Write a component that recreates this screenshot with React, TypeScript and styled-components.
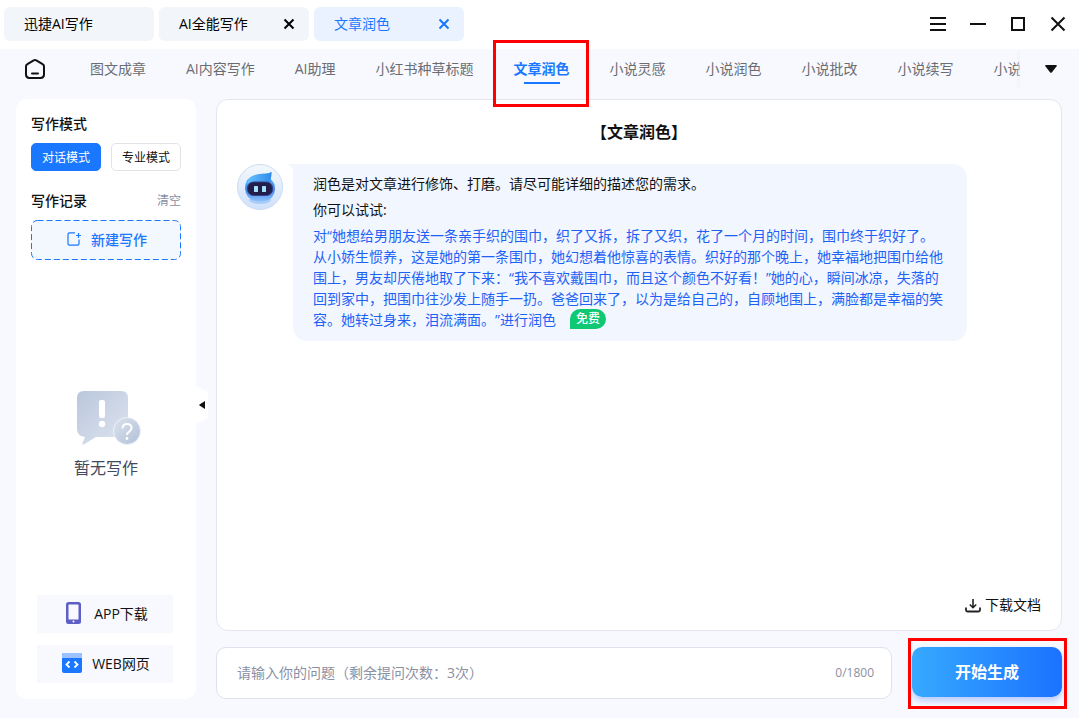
import React from "react";
import styled, { createGlobalStyle } from "styled-components";

const GlobalStyle = createGlobalStyle`
  *, *::before, *::after { box-sizing: border-box; }
  body {
    margin: 0;
    background: #f7f9fe;
    color: #111;
    font-family: "Open Sans", "Noto Sans CJK SC", sans-serif;
    font-size: 14px;
    line-height: 21px;
    text-spacing-trim: space-all;
  }
  button, input {
    font: inherit;
    color: inherit;
    border: 0;
    padding: 0;
    background: none;
  }
  button { cursor: pointer; }
  h1, h2, p { margin: 0; }
  svg { display: block; flex: none; }
`;

const Shell = styled.div`
  display: flex;
  flex-direction: column;
  min-height: 100vh;
`;

const TitleBar = styled.header`
  display: flex;
  align-items: center;
  justify-content: space-between;
  height: 49px;
  padding: 0 1px 1px 4px;
  background: #fff;
`;

const DocTabs = styled.div`
  display: flex;
  gap: 5px;
`;

const DocTab = styled.div<{ $active?: boolean }>`
  display: flex;
  align-items: center;
  justify-content: space-between;
  width: 150px;
  height: 34px;
  padding: 0 14px 0 20px;
  border-radius: 6px;
  background: ${(p) => (p.$active ? "#eaf2ff" : "#f2f6fb")};
  color: ${(p) => (p.$active ? "#1a77ff" : "#000")};
`;

const DocTabLabel = styled.button`
  padding-bottom: 2px;
`;

const WindowControls = styled.div`
  display: flex;
`;

const ControlButton = styled.button`
  display: grid;
  place-items: center;
  width: 40px;
  height: 40px;
`;

const Nav = styled.nav`
  display: flex;
  align-items: center;
  height: 40px;
  padding-left: 24px;
`;

const HomeButton = styled.button`
  margin-right: 44px;
`;

const NavStrip = styled.div`
  position: relative;
  z-index: 1;
  display: flex;
  flex: 1;
  align-items: center;
  gap: 40px;
  height: 40px;
  min-width: 0;
  overflow-x: clip;
  overflow-y: visible;

  &::after {
    content: "";
    position: absolute;
    top: 2px;
    right: 0;
    width: 5px;
    height: 38px;
    background: linear-gradient(90deg, rgba(240, 241, 245, 0), #eff0f4);
    opacity: 0.6;
  }
`;

const NavItem = styled.button<{ $active?: boolean }>`
  position: relative;
  flex: none;
  height: 40px;
  padding-bottom: 2px;
  white-space: nowrap;
  color: ${(p) => (p.$active ? "#1a77ff" : "#6b6d73")};
  font-weight: ${(p) => (p.$active ? 700 : 400)};
`;

const ActiveLine = styled.span`
  position: absolute;
  left: 10px;
  right: 10px;
  bottom: 5px;
  height: 2px;
  background: #1a77ff;
`;

const NavHighlight = styled.span`
  position: absolute;
  inset: -9px -19px -18px -21px;
  border: 3px solid #f00;
  pointer-events: none;
`;

const MoreButton = styled.button`
  display: grid;
  place-items: center;
  width: 59px;
  height: 40px;
  padding-left: 2px;
`;

const Body = styled.div`
  display: flex;
  flex: 1;
  gap: 20px;
  padding: 10px 17px 19px 16px;
`;

const Sidebar = styled.aside`
  position: relative;
  display: flex;
  flex: none;
  flex-direction: column;
  width: 180px;
  padding: 14px 15px 16px;
  border-radius: 10px;
  background: #fff;
`;

const SectionHead = styled.div`
  display: flex;
  align-items: center;
  justify-content: space-between;
`;

const SectionTitle = styled.h2`
  font-size: 14px;
  line-height: 21px;
  font-weight: 500;
`;

const ClearButton = styled.button`
  font-size: 12px;
  color: #8b8ea3;
`;

const ModeRow = styled.div`
  display: flex;
  gap: 10px;
  margin: 9px 0 19px;
`;

const ModeButton = styled.button<{ $active?: boolean }>`
  flex: 1;
  height: 28px;
  border: 1px solid ${(p) => (p.$active ? "#1a77ff" : "#e2e3e8")};
  border-radius: 5px;
  background: ${(p) => (p.$active ? "#1a77ff" : "#fff")};
  color: ${(p) => (p.$active ? "#fff" : "#111")};
  font-size: 12px;
`;

const NewButton = styled.button`
  position: relative;
  display: flex;
  align-items: center;
  justify-content: center;
  gap: 10px;
  height: 40px;
  margin-top: 9px;
  padding: 0 0 2px 2px;
  border-radius: 6px;
  background: #f3f7fe;
  color: #1a77ff;
  font-weight: 500;
`;

const DashedOutline = styled.svg`
  position: absolute;
  inset: 0;
  width: 100%;
  height: 100%;
`;

const EmptyState = styled.div`
  display: flex;
  flex: 1;
  flex-direction: column;
  align-items: center;
  justify-content: center;
  gap: 10px;
  padding-top: 15px;
  color: #43495c;
  font-size: 16px;
  line-height: 24px;

  svg { margin-left: 6px; }
`;

const AppLinks = styled.div`
  display: flex;
  flex-direction: column;
  gap: 12px;
  padding: 0 8px 0 6px;
`;

const AppLink = styled.button`
  display: flex;
  align-items: center;
  justify-content: center;
  gap: 10px;
  height: 38px;
  padding: 0 0 2px 2px;
  background: #f7f9fe;
`;

const CollapseHandle = styled.button`
  position: absolute;
  top: 50%;
  left: 180px;
  margin-top: -13px;
`;

const Main = styled.main`
  display: flex;
  flex: 1;
  flex-direction: column;
  gap: 16px;
  min-width: 0;
`;

const ChatPanel = styled.section`
  display: flex;
  flex: 1;
  flex-direction: column;
  padding: 20px 20px 15px;
  border: 1px solid #e4e6ef;
  border-radius: 12px;
  background: #fff;
`;

const PanelTitle = styled.h1`
  font-size: 16px;
  line-height: 24px;
  font-weight: 700;
  text-align: center;
`;

const Message = styled.div`
  display: flex;
  align-items: flex-start;
  gap: 10px;
  margin: 20px 74px 0 0;
`;

const Bubble = styled.div`
  position: relative;
  flex: 1;
  display: flex;
  flex-direction: column;
  gap: 5px;
  padding: 9px 20px 11px;
  border-radius: 0 14px 14px 14px;
  background: #f2f6fe;

  &::before {
    content: "";
    position: absolute;
    top: 0;
    left: -8px;
    width: 8px;
    height: 8px;
    background: radial-gradient(circle at 0 100%, transparent 8px, #f2f6fe 8px);
  }
`;

const Sample = styled.p`
  color: #1e62f5;
`;

const FreeBadge = styled.span`
  display: inline-block;
  height: 20px;
  margin-left: 14px;
  padding: 0 6px;
  border-radius: 10px 10px 10px 0;
  background: #0fc873;
  color: #fff;
  font-size: 12px;
  line-height: 20px;
  font-weight: 500;
  vertical-align: top;
`;

const DownloadButton = styled.button`
  display: flex;
  align-items: center;
  gap: 4px;
  margin: auto 0 0 auto;
`;

const Composer = styled.form`
  display: flex;
  align-items: flex-start;
  gap: 20px;
`;

const PromptBox = styled.div`
  display: flex;
  flex: 1;
  align-items: center;
  height: 52px;
  padding: 0 17px 2px 20px;
  border: 1px solid #dfe2ec;
  border-radius: 10px;
  background: #fff;
  color: #8b90a3;
`;

const PromptInput = styled.input`
  flex: 1;
  min-width: 0;
  height: 40px;
  outline: 0;

  &::placeholder { color: #8b90a3; opacity: 1; }
`;

const Counter = styled.span`
  font-size: 12px;
`;

const GenerateButton = styled.button`
  position: relative;
  width: 150px;
  height: 50px;
  border-radius: 10px;
  background: linear-gradient(90deg, #36a9ff, #1b72ff);
  box-shadow: 0 4px 6px rgba(40, 100, 255, 0.3);
  color: #fff;
  font-size: 16px;
  font-weight: 700;
`;

const GenerateHighlight = styled.span`
  position: absolute;
  inset: -9px -5px -12px -4px;
  border: 3px solid #f00;
  pointer-events: none;
`;

const CloseIcon = () => (
  <svg width="12" height="12" viewBox="0 0 12 12" fill="none" stroke="currentColor" strokeWidth="2">
    <path d="M1.5 1.5l9 9M10.5 1.5l-9 9" />
  </svg>
);

const HomeIcon = () => (
  <svg width="22" height="22" viewBox="0 0 22 22" fill="none" stroke="#111" strokeWidth="2" strokeLinejoin="round" strokeLinecap="round">
    <path d="M9.7 2.4 3.4 6.2Q2 7 2 8.6V16.6Q2 20 5.4 20H16.6Q20 20 20 16.6V8.6Q20 7 18.6 6.2L12.3 2.4Q11 1.6 9.7 2.4Z" />
    <path d="M8 15.5h6" />
  </svg>
);

const NewDocIcon = () => (
  <svg width="14" height="14" viewBox="0 0 14 14" fill="none" stroke="#1a77ff" strokeWidth="1.2">
    <path d="M8 .8H2.400Q1 .8 1 2.200v9.600q0 1.400 1.400 1.400h8.200q1.400 0 1.400-1.400V7.500" />
    <path d="M11.500 1v5M9 3.500h5" />
  </svg>
);

const EmptyIcon = () => (
  <svg width="66" height="56" viewBox="0 0 66 56" fill="none">
    <defs>
      <linearGradient id="bubbleFill" x1="0" y1="0" x2="1" y2="1">
        <stop offset="0" stopColor="#b9c6dc" />
        <stop offset="1" stopColor="#dfe5ef" />
      </linearGradient>
      <linearGradient id="markFill" x1="0" y1="0" x2="1" y2="1">
        <stop offset="0" stopColor="#dce3ee" />
        <stop offset="1" stopColor="#b2bfd7" />
      </linearGradient>
    </defs>
    <path d="M8 1h37q7 0 7 7v32q0 7-7 7H20L7.500 54.500Q6 55 6.500 53.500L9 47Q1 46 1 39V8q0-7 7-7Z" fill="url(#bubbleFill)" />
    <rect x="23" y="10" width="6" height="18" rx="2" fill="#fff" />
    <circle cx="26" cy="34" r="3.200" fill="#fff" />
    <circle cx="51" cy="41" r="13.500" fill="url(#markFill)" stroke="#eef2f8" />
    <path d="M46.500 38.500q0-4.500 4.500-4.500t4.500 4q0 2.200-2.300 3.600T51 45" stroke="#fff" strokeWidth="2" />
    <circle cx="51" cy="48.500" r="1.400" fill="#fff" />
  </svg>
);

const PhoneIcon = () => (
  <svg width="20" height="22" viewBox="0 0 20 22">
    <rect x="2" y="0" width="15" height="22" rx="2.500" fill="#5d5fc4" />
    <rect x="4.500" y="2.500" width="10" height="15" rx="0.500" fill="#f7f9fe" />
    <rect x="8.500" y="18.500" width="2" height="2" rx="1" fill="#fff" />
  </svg>
);

const WebIcon = () => (
  <svg width="20" height="20" viewBox="0 0 20 20" fill="none">
    <rect width="20" height="20" rx="2" fill="#1a77ff" />
    <path d="M0 5V2q0-2 2-2h16q2 0 2 2v3Z" fill="#9dc3ff" />
    <path d="M7.500 8.500 4.500 11.500l3 3M12.500 8.500l3 3-3 3" stroke="#fff" strokeWidth="1.800" />
  </svg>
);

const DownloadIcon = () => (
  <svg width="16" height="16" viewBox="0 0 16 16" fill="none" stroke="#222" strokeWidth="1.800" strokeLinejoin="round">
    <path d="M1 10.500V13q0 1.500 1.500 1.500h11q1.500 0 1.500-1.500v-2.500" />
    <path d="M8 2v8.500M4.800 7.500 8 10.700l3.200-3.200" strokeWidth="1.600" />
  </svg>
);

const RobotAvatar = () => (
  <svg width="46" height="46" viewBox="0 0 46 46">
    <defs>
      <linearGradient id="discFill" x1="0" y1="0" x2="0" y2="1">
        <stop offset="0" stopColor="#f4f8fd" />
        <stop offset="1" stopColor="#cfe1fb" />
      </linearGradient>
      <linearGradient id="headFill" x1="0" y1="0" x2="0" y2="1">
        <stop offset="0" stopColor="#5cbcff" />
        <stop offset="0.600" stopColor="#3f86ea" />
        <stop offset="1" stopColor="#8fc1fb" />
      </linearGradient>
      <linearGradient id="hairFill" x1="0" y1="0" x2="1" y2="0">
        <stop offset="0" stopColor="#68c4ff" />
        <stop offset="1" stopColor="#2f8be8" />
      </linearGradient>
    </defs>
    <circle cx="23" cy="23" r="22.500" fill="url(#discFill)" stroke="#cbdcf0" />
    <ellipse cx="23" cy="36" rx="11" ry="4" fill="#a9cdfb" />
    <path d="M8 24Q8 14 18 11Q24 9.500 28 9.800Q32 9.500 34.500 8Q34.500 12 33.500 15Q38 19 38 25Q37 37.500 23 37.500Q8.500 37 8 24Z" fill="url(#headFill)" />
    <path d="M9 20Q12 12 19 11Q24 9.500 28 9.800Q32 9.500 34.500 8Q34.500 13 33 18Q22 15 9 20Z" fill="url(#hairFill)" />
    <rect x="10.500" y="18" width="25" height="13.500" rx="6" fill="#211f49" stroke="#3a3f8c" />
    <rect x="17" y="22" width="4" height="6" rx="0.500" fill="#a6e0ff" />
    <rect x="25" y="22" width="4" height="6" rx="0.500" fill="#a6e0ff" />
  </svg>
);

const docTabs = [
  { label: "迅捷AI写作", closable: false, active: false },
  { label: "AI全能写作", closable: true, active: false },
  { label: "文章润色", closable: true, active: true },
];

const navItems = [
  "图文成章", "AI内容写作", "AI助理", "小红书种草标题", "文章润色",
  "小说灵感", "小说润色", "小说批改", "小说续写", "小说",
];

export default function App() {
  return (
    <>
      <GlobalStyle />
      <Shell>
        <TitleBar>
          <DocTabs>
            {docTabs.map((t) => (
              <DocTab key={t.label} $active={t.active}>
                <DocTabLabel type="button">{t.label}</DocTabLabel>
                {t.closable && (
                  <button type="button" aria-label={`关闭${t.label}`}><CloseIcon /></button>
                )}
              </DocTab>
            ))}
          </DocTabs>
          <WindowControls>
            <ControlButton type="button" aria-label="菜单">
              <svg width="16" height="16" viewBox="0 0 16 16" stroke="#111" strokeWidth="2"><path d="M0 2h16M0 8h16M0 14h16" /></svg>
            </ControlButton>
            <ControlButton type="button" aria-label="最小化">
              <svg width="16" height="16" viewBox="0 0 16 16" stroke="#111" strokeWidth="2"><path d="M0 8h16" /></svg>
            </ControlButton>
            <ControlButton type="button" aria-label="最大化">
              <svg width="16" height="16" viewBox="0 0 16 16" fill="none" stroke="#111" strokeWidth="2"><path d="M2 2h12v12H2Z" /></svg>
            </ControlButton>
            <ControlButton type="button" aria-label="关闭">
              <svg width="16" height="16" viewBox="0 0 16 16" stroke="#111" strokeWidth="2"><path d="M1.500 1.500l13 13M14.500 1.500l-13 13" /></svg>
            </ControlButton>
          </WindowControls>
        </TitleBar>

        <Nav>
          <HomeButton type="button" aria-label="首页"><HomeIcon /></HomeButton>
          <NavStrip>
            {navItems.map((label) => {
              const active = label === "文章润色";
              return (
                <NavItem key={label} type="button" $active={active}>
                  {label}
                  {active && <ActiveLine />}
                  {active && <NavHighlight />}
                </NavItem>
              );
            })}
          </NavStrip>
          <MoreButton type="button" aria-label="更多">
            <svg width="12" height="8" viewBox="0 0 12 8"><path d="M1 0h10q1.500 0 .6 1.200L7 7.200q-1 1-2 0L.4 1.200Q-.5 0 1 0Z" fill="#111" /></svg>
          </MoreButton>
        </Nav>

        <Body>
          <Sidebar>
            <SectionTitle>写作模式</SectionTitle>
            <ModeRow>
              <ModeButton type="button" $active>对话模式</ModeButton>
              <ModeButton type="button">专业模式</ModeButton>
            </ModeRow>
            <SectionHead>
              <SectionTitle>写作记录</SectionTitle>
              <ClearButton type="button">清空</ClearButton>
            </SectionHead>
            <NewButton type="button">
              <DashedOutline viewBox="0 0 150 40" preserveAspectRatio="none" fill="none">
                <rect x="0.500" y="0.500" width="149" height="39" rx="6" stroke="#1a77ff" strokeDasharray="6 3" />
              </DashedOutline>
              <NewDocIcon />
              新建写作
            </NewButton>
            <EmptyState>
              <EmptyIcon />
              <span>暂无写作</span>
            </EmptyState>
            <AppLinks>
              <AppLink type="button"><PhoneIcon />APP下载</AppLink>
              <AppLink type="button"><WebIcon />WEB网页</AppLink>
            </AppLinks>
            <CollapseHandle type="button" aria-label="收起侧栏">
              <svg width="12" height="38" viewBox="0 0 12 38">
                <path d="M0 0 10 5q2 1 2 3v22q0 2-2 3L0 38Z" fill="#fff" />
                <path d="M9 15v8L3.500 19.500q-.8-.5 0-1Z" fill="#111" />
              </svg>
            </CollapseHandle>
          </Sidebar>

          <Main>
            <ChatPanel>
              <PanelTitle>【文章润色】</PanelTitle>
              <Message>
                <RobotAvatar />
                <Bubble>
                  <p>润色是对文章进行修饰、打磨。请尽可能详细的描述您的需求。</p>
                  <p>你可以试试:</p>
                  <Sample>
                    对“她想给男朋友送一条亲手织的围巾，织了又拆，拆了又织，花了一个月的时间，围巾终于织好了。
                    <br />
                    从小娇生惯养，这是她的第一条围巾，她幻想着他惊喜的表情。织好的那个晚上，她幸福地把围巾给他围上，男友却厌倦地取了下来：“我不喜欢戴围巾，而且这个颜色不好看！”她的心，瞬间冰凉，失落的回到家中，把围巾往沙发上随手一扔。爸爸回来了，以为是给自己的，自顾地围上，满脸都是幸福的笑容。她转过身来，泪流满面。”进行润色
                    <FreeBadge>免费</FreeBadge>
                  </Sample>
                </Bubble>
              </Message>
              <DownloadButton type="button"><DownloadIcon />下载文档</DownloadButton>
            </ChatPanel>
            <Composer onSubmit={(e) => e.preventDefault()}>
              <PromptBox>
                <PromptInput type="text" aria-label="问题" placeholder="请输入你的问题（剩余提问次数：3次）" />
                <Counter>0/1800</Counter>
              </PromptBox>
              <GenerateButton type="submit">
                开始生成
                <GenerateHighlight />
              </GenerateButton>
            </Composer>
          </Main>
        </Body>
      </Shell>
    </>
  );
}
